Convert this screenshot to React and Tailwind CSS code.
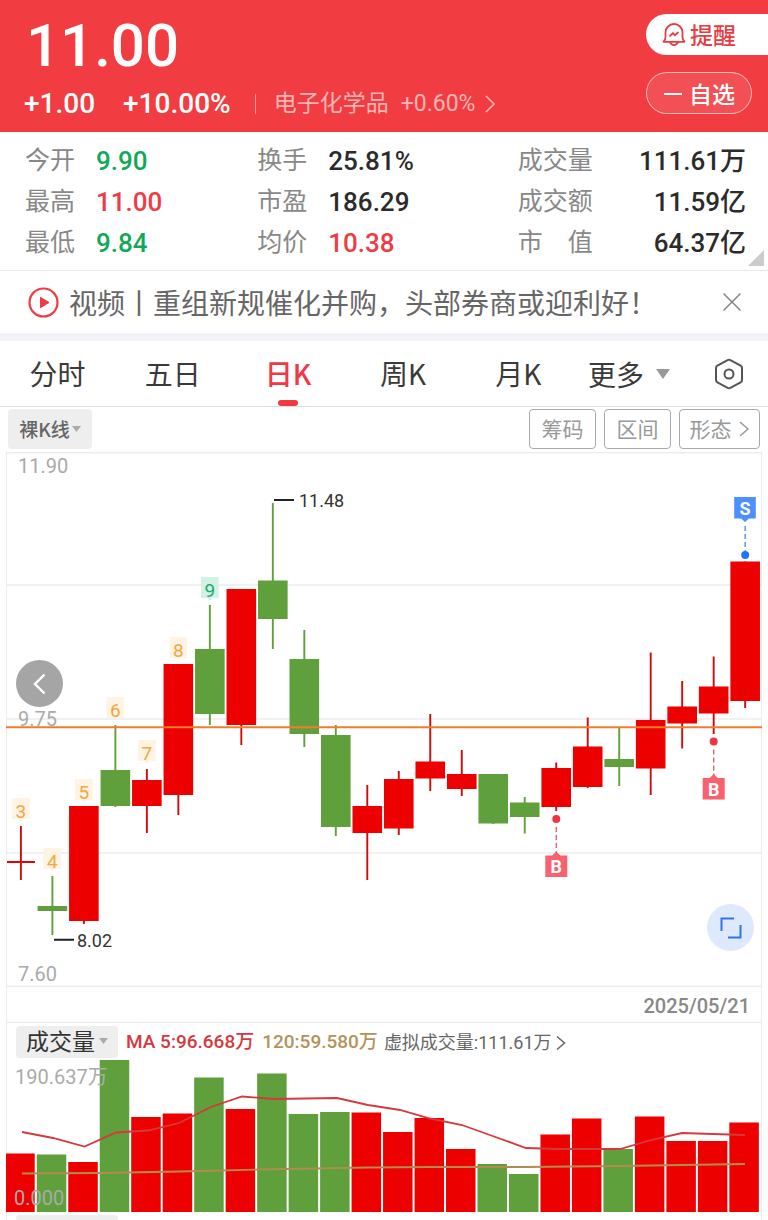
import React from "react";

const RED = "#ec0000";
const GREEN = "#5f9f3c";
const NUM = "Roboto, 'Noto Sans CJK SC', sans-serif";

// [colour, high, low, body top, body bottom, sequence number, sequence badge top]
const candles = [
  ["r", 826, 880, 861, 863, 3, 798],
  ["g", 876, 935, 906, 911, 4, 848],
  ["r", 806, 924, 806, 921, 5, 779],
  ["g", 725, 807, 770, 806, 6, 697],
  ["r", 769, 833, 780, 806, 7, 740],
  ["r", 664, 815, 664, 795, 8, 637],
  ["g", 605, 725, 649, 714, 9, 577],
  ["r", 589, 745, 589, 725],
  ["g", 503, 649, 580.5, 619],
  ["g", 630, 747, 659, 734],
  ["g", 725, 836, 735, 827],
  ["r", 785, 880, 806, 833],
  ["r", 771, 835, 779, 828.5],
  ["r", 714, 791, 761.5, 778.5],
  ["r", 750, 796, 774, 789],
  ["g", 774, 824, 774, 823.5],
  ["g", 797, 833.5, 802.5, 817],
  ["r", 762.5, 811, 768, 807],
  ["r", 717.5, 788, 746.5, 787],
  ["g", 727, 786, 759, 767],
  ["r", 652.5, 795, 720, 768.5],
  ["r", 681, 748.5, 706.5, 723.5],
  ["r", 656.5, 734, 686.5, 713.5],
  ["r", 561.5, 708, 561.5, 701],
];

const volumeTops = [
  1153.5, 1154.5, 1162, 1060, 1117, 1113.5, 1077.5, 1109, 1073.5, 1114, 1112, 1112.5,
  1132, 1118, 1149, 1164, 1174, 1134.5, 1118.5, 1149, 1116.5, 1141, 1141, 1122.5,
];

const ma5 =
  "22,1132 53,1138 84.5,1146.5 116,1132.5 148,1130.5 179,1123 211,1107 242,1096.5 274,1099 305,1098.5 337,1098 368,1105 400,1110 430,1118.5 462,1125 494,1136.5 526,1148 557,1149 588,1149 620,1149 651,1140 682,1133 713,1134 745,1135";
const ma120 =
  "22,1173.5 100,1173 180,1171.5 260,1169.5 368,1167.5 430,1167 525,1167 620,1166 745,1164";

const cx = (i) => 20.9 + 31.49 * i;
const fill = (c) => (c === "r" ? RED : GREEN);

function Header() {
  return (
    <header className="flex justify-between bg-[#f13d41] pl-6 text-white h-[132px]">
      <div className="flex flex-col">
        <h1 className="mt-3 pl-0.5 text-[60px] leading-[68px] font-medium">11.00</h1>
        <div className="mt-2 flex items-center text-[28px] leading-8 font-medium">
          <span>+1.00</span>
          <span className="ml-7">+10.00%</span>
          <span className="ml-6 h-5 w-px bg-white/50" />
          <a href="#sector" className="ml-[18px] flex items-center font-normal text-[23px] text-[#fbb4b5]">
            <span>电子化学品</span>
            <span className="ml-3">+0.60%</span>
            <svg className="ml-2" width="14" height="20" viewBox="0 0 14 20" fill="none" stroke="currentColor" strokeWidth="1.6">
              <path d="M3 2l8 8-8 8" />
            </svg>
          </a>
        </div>
      </div>
      <div className="flex w-[122px] flex-col items-start font-['Noto_Sans_CJK_SC',sans-serif]">
        <button className="mt-3.5 flex h-[41px] w-full items-center rounded-l-full bg-white pl-4 text-[23px] font-medium text-[#e63c42]">
          <svg width="24" height="24" viewBox="0 0 24 24" fill="none" stroke="currentColor" strokeWidth="1.8" strokeLinecap="round" strokeLinejoin="round">
            <path d="M1.500 18.800c1.600-1.200 2-2.600 2-4.800V9.500a8.500 8.500 0 0 1 17 0V14c0 2.200.400 3.600 2 4.800z" />
            <path d="M8 19.200c.8 2 2.200 2.900 4 2.900s3.200-.900 4-2.900" />
            <path d="M8 12.800l3-2.800 1.800 2.300 3.200-2.800" />
          </svg>
          <span className="ml-1">提醒</span>
        </button>
        <button className="mt-[17px] flex h-[42px] w-[106px] items-center rounded-full border border-white/60 bg-white/10 pl-4 text-[23px] font-medium">
          <svg width="20" height="20" viewBox="0 0 20 20" stroke="currentColor" strokeWidth="2">
            <path d="M1 11h18" />
          </svg>
          <span className="ml-1.5">自选</span>
        </button>
      </div>
    </header>
  );
}

function Stat({ label, value, tone, end }) {
  return (
    <div className={end ? "flex items-center justify-between" : "flex items-center"}>
      <dt className={end ? "whitespace-pre text-[#888]" : "w-[71px] text-[#888]"}>{label}</dt>
      <dd className={"pt-0.5 text-[26px] font-medium " + tone}>{value}</dd>
    </div>
  );
}

function Stats() {
  const g = "text-[#12a85a]";
  const r = "text-[#ee3b45]";
  const k = "text-[#2b2b2b]";
  return (
    <section className="relative border-b border-[#e8e8ea] pt-2 pb-[7px] pl-[25px] pr-[22px]">
      <dl className="grid auto-rows-[41px] grid-cols-[232fr_260fr_228fr] text-[25px]">
        <Stat label="今开" value="9.90" tone={g} />
        <Stat label="换手" value="25.81%" tone={k} />
        <Stat label="成交量" value="111.61万" tone={k} end />
        <Stat label="最高" value="11.00" tone={r} />
        <Stat label="市盈" value="186.29" tone={k} />
        <Stat label="成交额" value="11.59亿" tone={k} end />
        <Stat label="最低" value="9.84" tone={g} />
        <Stat label="均价" value="10.38" tone={r} />
        <Stat label="市　值" value="64.37亿" tone={k} end />
      </dl>
      <svg className="absolute right-1 bottom-1" width="16" height="16" viewBox="0 0 16 16">
        <path d="M16 0v16H0z" fill="#ccc" />
      </svg>
    </section>
  );
}

function News() {
  return (
    <section className="flex h-[62px] items-center pl-7 pr-6 text-[28px] text-[#666] font-['Noto_Sans_CJK_SC',sans-serif]">
      <svg width="31" height="31" viewBox="0 0 31 31">
        <circle cx="15.500" cy="15.500" r="14" fill="none" stroke="#ee3b45" strokeWidth="2.200" />
        <path d="M12.500 10.300l8.500 5.200-8.500 5.200z" fill="#ee3b45" stroke="#ee3b45" strokeLinejoin="round" />
      </svg>
      <a href="#news" className="ml-2.5 grow whitespace-nowrap">视频丨重组新规催化并购，头部券商或迎利好！</a>
      <button aria-label="关闭">
        <svg width="24" height="24" viewBox="0 0 24 24" stroke="#888" strokeWidth="1.600">
          <path d="M3.500 3.500l17 17M20.500 3.500l-17 17" />
        </svg>
      </button>
    </section>
  );
}

function Tabs() {
  return (
    <nav className="flex h-[66px] border-b border-[#dedede] text-[28px] text-[#3a3a3a] font-['Noto_Sans_CJK_SC',sans-serif]">
      {["分时", "五日", "日K", "周K", "月K"].map((t) => (
        <button
          key={t}
          className={
            "flex w-[15%] flex-col items-center justify-between pt-3 " + (t === "日K" ? "font-medium text-[#f23845]" : "")
          }
        >
          <span className="leading-10">{t}</span>
          {t === "日K" && <span className="h-1.5 w-5 rounded-full bg-[#f23845]" />}
        </button>
      ))}
      <button className="flex items-center gap-3 pl-3">
        更多
        <svg width="14" height="10" viewBox="0 0 14 10">
          <path d="M0 0h14L7 10z" fill="#999" />
        </svg>
      </button>
      <button aria-label="设置" className="ml-auto pr-6">
        <svg width="30" height="32" viewBox="0 0 30 32" fill="none" stroke="#555" strokeWidth="2">
          <path strokeLinejoin="round" d="M13.600 2.200a3 3 0 0 1 2.800 0l10.200 5.500a2.600 2.600 0 0 1 1.400 2.300v12a2.600 2.600 0 0 1-1.400 2.300l-10.200 5.500a3 3 0 0 1-2.800 0L3.400 24.300A2.600 2.600 0 0 1 2 22V10a2.600 2.600 0 0 1 1.400-2.300z" />
          <circle cx="15" cy="16" r="4.500" />
        </svg>
      </button>
    </nav>
  );
}

function Toolbar() {
  const box = "flex h-10 items-center justify-center rounded border border-[#aaa] text-[21px] text-[#999]";
  return (
    <div className="flex items-center gap-2 px-2 pt-0.5 pb-[3px] font-['Noto_Sans_CJK_SC',sans-serif]">
      <button className="mr-auto flex h-10 w-[84px] items-center justify-center gap-0.5 rounded bg-[#eee] text-[19px] font-medium text-[#666]">
        裸K线
        <svg width="9" height="6" viewBox="0 0 9 6">
          <path d="M0 0h9L4.500 6z" fill="#aaa" />
        </svg>
      </button>
      <button className={box + " w-[67px]"}>筹码</button>
      <button className={box + " w-[67px]"}>区间</button>
      <button className={box + " w-[81px] gap-1.5"}>
        形态
        <svg width="12" height="18" viewBox="0 0 12 18" fill="none" stroke="currentColor" strokeWidth="1.500">
          <path d="M2 2l8 7-8 7" />
        </svg>
      </button>
    </div>
  );
}

function BuyMarker({ x, y }) {
  return (
    <g>
      <circle cx={x} cy={y} r="4" fill="#ef3542" />
      <path d={`M${x} ${y + 8}v27`} stroke="#e0606c" strokeWidth="1.400" strokeDasharray="5 3" />
      <path d={`M${x - 11} ${y + 36.500}h7l4-4 4 4h7v21.500h-22z`} fill="#f8616d" />
      <text x={x} y={y + 54} textAnchor="middle" fontSize="18" fontWeight="700" fill="#fff">B</text>
    </g>
  );
}

function PriceChart() {
  return (
    <div className="relative">
      <svg className="block h-auto w-full" viewBox="6 452 756 535" fontFamily={NUM} role="img" aria-label="日K">
        <g stroke="#ededed" strokeWidth="1.500">
          <path d="M6 452.700H762M6 585H762M6 719H762M6 853H762M6 986.300H762" />
        </g>
        <g fontSize="20" fill="#aaa">
          <text x="18" y="473">11.90</text>
          <text x="18" y="981">7.60</text>
        </g>
        {candles.map(([c, hi, lo, top, bottom, n, ny], i) => (
          <g key={i}>
            <path d={`M${cx(i)} ${hi}V${lo}`} stroke={c === "r" ? "#cf0a0a" : GREEN} strokeWidth="1.900" />
            <rect x={i === 0 ? 7 : cx(i) - 14.8} y={top} width={i === 0 ? 28 : 29.6} height={bottom - top} fill={fill(c)} />
            {n && (
              <>
                <path
                  d={`M${cx(i) - 8.800} ${ny}h17.600v21h-6.300l-2.500 2.500-2.500-2.500h-6.300z`}
                  fill={n === 9 ? "#d3f1e5" : "#fff3e4"}
                />
                <text x={cx(i)} y={ny + 20} textAnchor="middle" fontSize="19" fill={n === 9 ? "#1fa86f" : "#f3a73c"}>{n}</text>
              </>
            )}
          </g>
        ))}
        <text x="18" y="726" fontSize="20" fill="#aaa">9.75</text>
        <path d="M6 727.300H762" stroke="#f07c2c" strokeWidth="2" />
        <g stroke="#222" strokeWidth="2">
          <path d="M274 500H294M54 939.700H74" />
        </g>
        <g fontSize="18" fill="#333">
          <text x="299" y="507">11.48</text>
          <text x="77" y="947">8.02</text>
        </g>
        <BuyMarker x={556.300} y={819} />
        <BuyMarker x={713.700} y={741.600} />
        <path d="M734.200 497h21.600v21.500h-6.800l-4 3.500-4-3.500h-6.800z" fill="#4f8ffb" />
        <text x="745" y="514.500" textAnchor="middle" fontSize="18" fontWeight="700" fill="#fff">S</text>
        <path d="M745.200 526v26" stroke="#6496e8" strokeWidth="1.500" strokeDasharray="5 3" />
        <circle cx="745.200" cy="555" r="4" fill="#1f74fb" />
      </svg>
      <button aria-label="向左" className="absolute top-52 left-2.5 flex size-[47px] items-center justify-center rounded-full bg-[#a5a5a5]">
        <svg width="20" height="24" viewBox="0 0 20 24" fill="none" stroke="#fff" strokeWidth="2.400">
          <path d="M14.500 2.500L5 12l9.500 9.500" />
        </svg>
      </button>
      <button aria-label="全屏" className="absolute right-2 bottom-9 flex size-[47px] items-center justify-center rounded-full bg-[#dfe9fd]">
        <svg width="22" height="22" viewBox="0 0 22 22" fill="none" stroke="#2f75e8" strokeWidth="2">
          <path d="M14 1.500H1.500V14M8 20.500H20.500V8" />
        </svg>
      </button>
    </div>
  );
}

function VolumeChart() {
  return (
    <svg className="block h-auto w-full" viewBox="6 1060 756 152" fontFamily={NUM} role="img" aria-label="成交量">
      {volumeTops.map((top, i) => (
        <rect
          key={i}
          x={i === 0 ? 6 : 5.300 + 31.480 * i}
          y={top}
          width={i === 0 ? 28.700 : 29.500}
          height={1212 - top}
          fill={fill(candles[i][0])}
        />
      ))}
      <polyline points={ma120} fill="none" stroke="#b08d4f" strokeWidth="1.800" />
      <polyline points={ma5} fill="none" stroke="#d5393d" strokeWidth="1.800" />
      <g fontSize="20" fill="#aaa">
        <text x="15" y="1084">190.637万</text>
        <text x="14" y="1205">0.000</text>
      </g>
    </svg>
  );
}

export default function App() {
  return (
    <main className="min-h-screen w-full overflow-hidden bg-white font-[Roboto,'Noto_Sans_CJK_SC',sans-serif]">
      <Header />
      <Stats />
      <News />
      <div className="h-2 bg-[#f2f3f8]" />
      <Tabs />
      <Toolbar />
      <div className="mx-1.5 border-x border-[#ededed]">
        <div className="-mx-px">
          <PriceChart />
          <div className="flex h-9 items-center justify-end border-b border-[#ebebeb] pt-0.5 pr-3 text-[20px] font-medium text-[#888]">
            <time dateTime="2025-05-21">2025/05/21</time>
          </div>
          <div className="flex h-[37px] items-center pt-0.5 pl-2.5 text-[19px]">
            <button className="mb-0.5 flex h-8 w-[102px] items-center justify-center gap-1 rounded bg-[#eee] pb-0.5 font-['Noto_Sans_CJK_SC',sans-serif] text-[23px] text-[#333]">
              成交量
              <svg width="9" height="6" viewBox="0 0 9 6">
                <path d="M0 0h9L4.500 6z" fill="#aaa" />
              </svg>
            </button>
            <span className="ml-2 font-medium text-[#d5393d]">MA 5:96.668万</span>
            <span className="ml-2 font-medium text-[#b3935a]">120:59.580万</span>
            <a href="#virtual" className="ml-1.5 flex items-center gap-1 text-[18px] text-[#666]">
              虚拟成交量:111.61万
              <svg width="10" height="16" viewBox="0 0 10 16" fill="none" stroke="currentColor" strokeWidth="1.500">
                <path d="M1 1.500L8.500 8 1 14.500" />
              </svg>
            </a>
          </div>
          <VolumeChart />
          <div className="mt-[3px] ml-2.5 h-1.5 w-[102px] rounded-t bg-[#eee]" />
        </div>
      </div>
    </main>
  );
}
